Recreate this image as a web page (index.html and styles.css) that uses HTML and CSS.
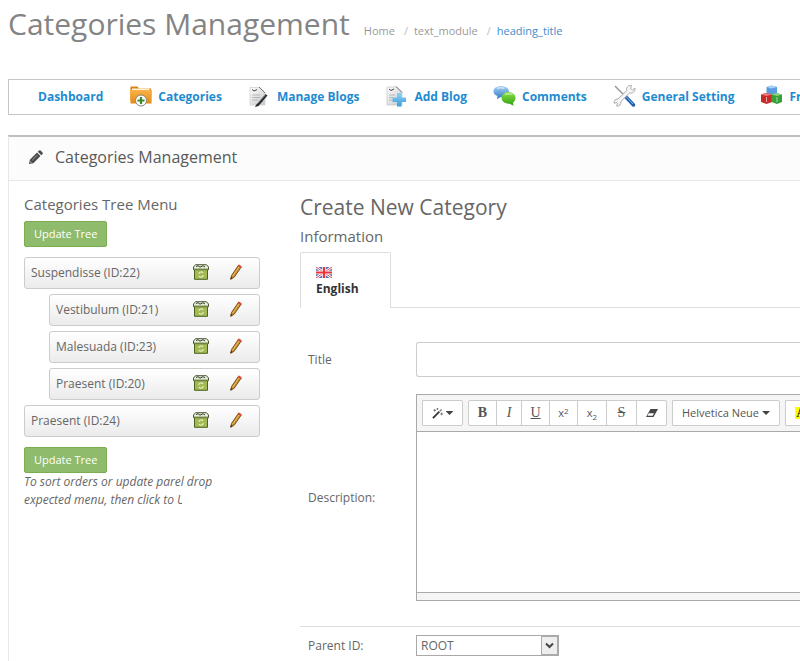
FILE: index.html
```html
<!DOCTYPE html>
<html lang="en">
<head>
<meta charset="utf-8">
<title>Categories Management</title>
<link rel="stylesheet" href="styles.css">
</head>
<body>
<svg class="defs" aria-hidden="true">
  <defs>
    <linearGradient id="folder" x2="0" y2="1"><stop stop-color="#f9b24a"/><stop offset="1" stop-color="#e48a12"/></linearGradient>
    <linearGradient id="paper" x2="1" y2="1"><stop stop-color="#fff"/><stop offset="1" stop-color="#c4c6c8"/></linearGradient>
    <linearGradient id="blue" x2="0" y2="1"><stop stop-color="#a9d3f3"/><stop offset="1" stop-color="#2c78c4"/></linearGradient>
    <linearGradient id="cross" x2="0" y2="1"><stop stop-color="#8fd0f2"/><stop offset="1" stop-color="#3a9ddb"/></linearGradient>
    <linearGradient id="green" x2="0" y2="1"><stop stop-color="#8be04a"/><stop offset="1" stop-color="#2fa00e"/></linearGradient>
  </defs>
  <symbol id="bin" viewBox="0 0 16 16">
    <path d="M1.500 5.500h13v9.800h-13z" fill="#a3b956" stroke="#4a6420"/>
    <path d="M.5 3 2.500.7h11l2 2.300v2.700H.5z" fill="#e8ecdd" stroke="#4a5a35"/>
    <path d="M3 2.500l2-.8 2 1.500 3-1.500 2 1.300" fill="none" stroke="#34402a"/>
    <path d="M1 5h14" stroke="#7f9a45"/>
    <path d="M5.800 9.800a2.300 2.300 0 0 1 4.200-.8M10.300 11a2.300 2.300 0 0 1-4.300 1" fill="none" stroke="#e3efb8" stroke-width="1.200"/>
  </symbol>
  <symbol id="edit" viewBox="0 0 12 16">
    <path d="M.7 15.300 1.500 11.500 8.500 1.200 11.300 3 4.200 13.200z" fill="#c98a2b" stroke="#6e4817" stroke-width=".9"/>
    <path d="M2.700 12.200 9 3" stroke="#efc063" stroke-width="1"/>
    <path d="M8 2 9 .6l2.600 1.600-1 1.700z" fill="#e6413c"/>
    <path d="M.5 15.500 1 13l1.400 1.100z" fill="#322"/>
  </symbol>
</svg>

<header class="page-head">
  <h1>Categories Management</h1>
  <nav class="crumbs" aria-label="Breadcrumb">
    <a href="#">Home</a><a href="#">text_module</a><a class="current" href="#">heading_title</a>
  </nav>
</header>

<nav class="toolbar" aria-label="Blog">
  <a href="#">Dashboard</a>
  <a href="#"><svg viewBox="0 0 24 24"><path d="M1.500 1.500h7l1.500 2h12v12h-20.500z" fill="#d98210"/><path d="M3 3.500h17.500v4H3z" fill="#fff2d0"/><path d="M1 5h22l-.5 13.500H1.500z" fill="url(#folder)"/><circle cx="12" cy="15.500" r="5.500" fill="#fff" stroke="#8a8578"/><path d="M12 12v7M8.500 15.500h7" stroke="#3d8b2c" stroke-width="2.200"/></svg>Categories</a>
  <a href="#"><svg viewBox="0 0 24 24"><path d="M2 2.500h10l5 5V20H2z" fill="url(#paper)" stroke="#d0d1d2" stroke-width=".8"/><path d="M4 4.500 6 6l3-1.500" stroke="#444" fill="none"/><path d="M4 10h8M4 12.500h8M4 15h6" stroke="#aaa" stroke-width=".8"/><path d="M11 2l6 6" fill="none" stroke="#777" stroke-width="1"/><path d="m8 20 9.500-11 2 1.500L10.500 21l-3.500 1z" fill="#28292b"/><path d="m9.500 18.500 8-8.800" stroke="#aaa" stroke-width=".8"/></svg>Manage Blogs</a>
  <a href="#"><svg viewBox="0 0 24 24"><path d="M2 2h10l5 5v13H2z" fill="url(#paper)" stroke="#c5c8ca" stroke-width=".8"/><path d="M4 4 6 5.500 9 4" stroke="#444" fill="none"/><path d="M4 10h6M4 12.500h4M4 15h3" stroke="#aaa" stroke-width=".8"/><path d="M11 1.500l6 6" fill="none" stroke="#777"/><path d="M12 8h4.500v4.500H21V17h-4.500v4.500H12V17H7.500v-4.500H12z" fill="url(#cross)"/></svg>Add Blog</a>
  <a href="#"><svg viewBox="0 0 24 24"><path d="M8 1c4.500 0 8 2.300 8 5.500S12.500 12 8 12l-4 2 .5-3C2 10 .5 8.500.5 6.500.5 3.300 3.500 1 8 1z" fill="url(#blue)"/><path d="M15.500 7c4 0 7 2.500 7 6 0 2-1.200 3.700-2.500 4.800l.5 3-4-2c-4.500 0-8-2.500-8-5.800s3-6 7-6z" fill="url(#green)"/><path d="M4 3.500c2-1 5-1 7.500 0M12 9.500c2-1 5-1 7.500 0" fill="none" stroke="#fff" stroke-opacity=".5" stroke-width="1.500"/></svg>Comments</a>
  <a href="#"><svg viewBox="0 0 24 24"><path d="m2 1 9 9" stroke="#999" stroke-width="1.500"/><path d="m13 12 7.500 8" stroke="#225fb1" stroke-width="3.500" stroke-linecap="round"/><path d="m13 11.500 7 7.500" stroke="#80b5ec" stroke-width="1"/><path d="M18.500.5c-3-.5-5.500 2-4.700 5L5 14c-2.500-.2-4.500 2-3.800 4.300l2.300-.8 1 1.300-1 2.200c3 .5 4.700-1.500 4.300-4.300L16.500 8c3 .8 6-1.700 5.500-5l-2.500 2-2-1.500z" fill="#f6f6f7" stroke="#a0a2a4" stroke-width=".9"/></svg>General Setting</a>
  <a href="#"><svg viewBox="0 0 24 24"><path d="m6.500 2 5-1.500L17 2v7l-5.500 2-5-2z" fill="#5b9de0"/><path d="m6.500 2 5 1.500L17 2 11.500.5z" fill="#add4f8"/><path d="m1 9.500 5-1.500 6 1.500V17l-5.500 2L1 17z" fill="#c82929"/><path d="m1 9.500 5.500 1.500L12 9.500 6 8z" fill="#ee7a74"/><path d="m11.500 9.500 5-1.500 5.500 1.500V17l-5 2-5.500-2z" fill="#38a038"/><path d="m11.500 9.500 5.500 1.500 5-1.500L16.500 8z" fill="#8bd47f"/><path d="M6.500 12v5M17 12v5" stroke="#fff" stroke-opacity=".6"/></svg>Front Modules</a>
</nav>

<main class="panel">
  <div class="panel-head">
    <svg viewBox="0 0 14 14"><path d="M0 14 .8 9.700 8 2.500 11.500 6l-7.200 7.200zM8.800 1.700 10 .5q.8-.7 1.600 0L13.500 2.400q.7.800 0 1.600L12.300 5.200z" fill="#4c4c4c"/><path d="M3.200 10.200 8.300 5.100" stroke="#bbb" stroke-width=".7"/><path d="M1.200 11.500 2.500 12.800" stroke="#fff" stroke-width=".8"/></svg>
    <h2>Categories Management</h2>
  </div>
  <div class="panel-body">
    <aside class="tree">
      <h3>Categories Tree Menu</h3>
      <button class="btn" type="button">Update Tree</button>
      <ol>
        <li><div class="node"><span>Suspendisse (ID:22)</span><a href="#" aria-label="Delete"><svg class="bin"><use href="#bin"/></svg></a><a href="#" aria-label="Edit"><svg class="edit"><use href="#edit"/></svg></a></div>
          <ol>
            <li><div class="node"><span>Vestibulum (ID:21)</span><a href="#" aria-label="Delete"><svg class="bin"><use href="#bin"/></svg></a><a href="#" aria-label="Edit"><svg class="edit"><use href="#edit"/></svg></a></div></li>
            <li><div class="node"><span>Malesuada (ID:23)</span><a href="#" aria-label="Delete"><svg class="bin"><use href="#bin"/></svg></a><a href="#" aria-label="Edit"><svg class="edit"><use href="#edit"/></svg></a></div></li>
            <li><div class="node"><span>Praesent (ID:20)</span><a href="#" aria-label="Delete"><svg class="bin"><use href="#bin"/></svg></a><a href="#" aria-label="Edit"><svg class="edit"><use href="#edit"/></svg></a></div></li>
          </ol>
        </li>
        <li><div class="node"><span>Praesent (ID:24)</span><a href="#" aria-label="Delete"><svg class="bin"><use href="#bin"/></svg></a><a href="#" aria-label="Edit"><svg class="edit"><use href="#edit"/></svg></a></div></li>
      </ol>
      <button class="btn" type="button">Update Tree</button>
      <p class="hint"><span>To sort orders or update parel drop</span><span class="cut">expected menu, then click to U</span></p>
    </aside>

    <form class="editor">
      <h2>Create New Category</h2>
      <h3>Information</h3>
      <div class="tabs">
        <a class="tab" href="#"><svg viewBox="0 0 16 11"><path d="M0 0h16v11H0z" fill="#5a70bf"/><path d="m0 0 16 11M16 0 0 11" stroke="#fff" stroke-width="2.600"/><path d="m0 0 16 11M16 0 0 11" stroke="#e05055" stroke-width="1"/><path d="M8 0v11M0 5.500h16" stroke="#fff" stroke-width="3.600"/><path d="M8 0v11M0 5.500h16" stroke="#e8353a" stroke-width="2.200"/></svg>English</a>
      </div>
      <div class="row title-row">
        <label for="title">Title</label>
        <input id="title" type="text">
      </div>
      <div class="row desc-row">
        <label for="desc">Description:</label>
        <div class="note">
          <div class="note-bar">
            <div class="group"><button class="w-magic" type="button" aria-label="Style"><svg class="wand" viewBox="0 0 12 12"><path d="m1 11 7-7" stroke="#333" stroke-width="2"/><path d="m8.500 3.500 2-2" stroke="#777" stroke-width="1.500"/><path d="M3 1v3M1.500 2.500h3M6 0v2M5 1h2M10.500 5v3M9 6.500h3" stroke="#555" stroke-width=".8"/></svg><i class="caret"></i></button></div>
            <div class="group">
              <button class="w-b serif" type="button"><b>B</b></button>
              <button class="w-i serif" type="button"><em>I</em></button>
              <button class="w-b serif" type="button"><u>U</u></button>
              <button class="w-b" type="button">x<sup>2</sup></button>
              <button class="w-s" type="button">x<sub>2</sub></button>
              <button class="w-k serif" type="button"><s>S</s></button>
              <button class="w-k" type="button" aria-label="Clear"><svg class="eraser" viewBox="0 0 12 8"><path d="M4.500 0H12L7.500 8H0z" fill="#444"/><path d="M2.800 4.200h5.200L6.700 6.700H1.400z" fill="#fff"/></svg></button>
            </div>
            <div class="group"><button class="w-font" type="button">Helvetica Neue<i class="caret"></i></button></div>
            <div class="group"><button class="w-color serif" type="button"><mark>A</mark></button></div>
          </div>
          <textarea id="desc"></textarea>
          <div class="note-foot"></div>
        </div>
      </div>
      <div class="row parent-row">
        <label for="parent">Parent ID:</label>
        <div class="select">
          <select id="parent"><option>ROOT</option></select>
          <svg viewBox="0 0 17 19"><path d="M0 0h17v19H0z" fill="#eee"/><path d="M.5 0v19M0 .5h17M16.500 0v19M0 18.500h17" stroke="#aaa"/><path d="m5 7.500 3.500 3.500L12 7.500" fill="none" stroke="#444" stroke-width="2"/></svg>
        </div>
      </div>
    </form>
  </div>
</main>
</body>
</html>
```

FILE: styles.css
```css
* { box-sizing: border-box; }
body {
  display: flex;
  flex-direction: column;
  min-height: 100vh;
  margin: 0;
  padding-left: 8px;
  overflow: hidden;
  background: #fff;
  color: #666;
  font: 12px/18px "Open Sans", sans-serif;
}
h1, h2, h3, p, ol { margin: 0; padding: 0; font-weight: 400; }
ol { list-style: none; }
a { color: inherit; text-decoration: none; }
svg { display: block; flex: none; }
button, input, select, textarea { font: inherit; color: inherit; }
.defs { position: absolute; width: 0; height: 0; }

.page-head { display: flex; align-items: baseline; height: 79px; padding-top: 4px; }
h1 { font-size: 30px; line-height: 40px; color: #848484; }
.crumbs { display: flex; margin-left: 14px; font-size: 11px; color: #999; }
.crumbs a + a::before { content: "/"; padding: 0 6px 0 9px; color: #bbb; }
.crumbs .current { color: #428bca; }

.toolbar {
  display: flex;
  align-items: center;
  gap: 26px;
  height: 36px;
  padding-left: 29px;
  border: 1px solid #c5c5c5;
  border-right: 0;
  color: #1e8bd0;
  font-weight: 700;
  white-space: nowrap;
  overflow: hidden;
}
.toolbar a { display: flex; align-items: center; gap: 5px; flex: none; }
.toolbar svg { width: 24px; height: 24px; }

.panel { flex: 1; margin-top: 20px; border-top: 2px solid #bfbfbf; border-left: 1px solid #e8e8e8; }
.panel-head {
  display: flex;
  align-items: center;
  gap: 12px;
  height: 44px;
  padding: 0 0 3px 20px;
  background: #fcfcfc;
  border-bottom: 1px solid #e8e8e8;
}
.panel-head svg { width: 14px; height: 14px; }
.panel-head h2 { font-size: 16px; color: #595959; }
.panel-body { display: flex; gap: 40px; padding: 14px 0 0 15px; }

.tree { flex: none; width: 236px; }
h3 { font-size: 15px; line-height: 18px; }
.btn {
  display: block;
  height: 26px;
  padding: 0 9px;
  border: 1px solid #7aae50;
  border-radius: 2px;
  background: #8fbb6c;
  color: #fff;
  font-size: 11px;
  font-weight: 500;
}
.tree h3 { margin-bottom: 8px; }
.tree > ol { margin: 10px 0; }
.tree ol ol { padding-left: 25px; }
.tree li { margin-top: 5px; }
.tree > ol > li:first-child { margin-top: 0; }
.node {
  display: flex;
  align-items: center;
  height: 32px;
  padding: 0 17px 0 6px;
  border: 1px solid #ccc;
  border-radius: 3px;
  background: linear-gradient(#fff, #ebebeb);
}
.node span { flex: 1; }
.node a { padding-bottom: 2px; }
.bin { width: 16px; height: 16px; margin-right: 21px; }
.edit { width: 12px; height: 16px; }
.hint { font-style: italic; }
.hint span { display: block; white-space: nowrap; }
.hint .cut { width: 158px; overflow: hidden; }

.editor { flex: 1; min-width: 0; }
.editor h2 { margin-top: 2px; font-size: 21px; line-height: 20px; }
.editor h3 { margin: 10px 0 7px; }
.tabs { display: flex; height: 56px; border-bottom: 1px solid #ddd; }
.tab {
  display: flex;
  flex-direction: column;
  gap: 2px;
  width: 91px;
  height: 56px;
  padding: 14px 15px 0;
  border: 1px solid #ddd;
  border-bottom: 0;
  border-radius: 2px 2px 0 0;
  background: #fff;
  color: #333;
  font-weight: 700;
}
.tab svg { width: 16px; height: 11px; }
.row { display: flex; align-items: center; }
.row label { flex: none; width: 116px; padding-left: 8px; }
.title-row { margin-top: 34px; }
.title-row input { flex: 1; min-width: 0; height: 35px; border: 1px solid #ccc; border-right: 0; border-radius: 3px 0 0 3px; }
.desc-row { margin-top: 17px; }
.note { flex: 1; min-width: 0; border: 1px solid #a9a9a9; border-right: 0; }
.note-bar {
  display: flex;
  gap: 5px;
  height: 37px;
  padding: 5px;
  overflow: hidden;
  background: #f5f5f5;
  border-bottom: 1px solid #a9a9a9;
}
.group { display: flex; flex: none; }
.group button {
  display: flex;
  align-items: center;
  justify-content: center;
  height: 26px;
  padding: 0;
  border: 1px solid #ccc;
  background: #fff;
  color: #555;
  font-size: 11px;
}
.group button + button { margin-left: -1px; }
.group button:first-child { border-radius: 2px 0 0 2px; }
.group button:last-child { border-radius: 0 2px 2px 0; }
.group .serif { font: 14px/18px "Liberation Serif", serif; }
.group .w-magic { width: 41px; gap: 3px; }
.group .w-b { width: 29px; }
.group .w-i { width: 26px; }
.group .w-s { width: 30px; }
.group .w-k { width: 31px; }
.group .w-font { width: 108px; gap: 3px; }
.group .w-color { width: 38px; justify-content: flex-start; padding-left: 9px; }
sup, sub { font-size: 8px; line-height: 8px; }
sup { align-self: flex-start; margin-top: 6px; }
sub { align-self: flex-end; margin-bottom: 4px; }
mark { padding: 0 4px 0 1px; line-height: 12px; background: #ff0; }
.caret { width: 8px; height: 4px; background: #444; clip-path: polygon(0 0, 100% 0, 50% 100%); }
.wand { width: 11px; height: 11px; }
.eraser { width: 12px; height: 8px; }
textarea { display: block; width: 100%; height: 160px; border: 0; resize: none; }
.note-foot { height: 8px; border-top: 1px solid #a9a9a9; background: #f5f5f5; }
.parent-row { margin-top: 25px; padding-top: 8px; border-top: 1px solid #ddd; }
.select { display: grid; width: 143px; height: 21px; border: 1px solid #a9a9a9; align-items: stretch; }
.select > * { grid-area: 1 / 1; }
.select select { appearance: none; padding: 0 4px; border: 0; background: #fff; }
.select svg { width: 17px; height: 19px; justify-self: end; pointer-events: none; }
```
